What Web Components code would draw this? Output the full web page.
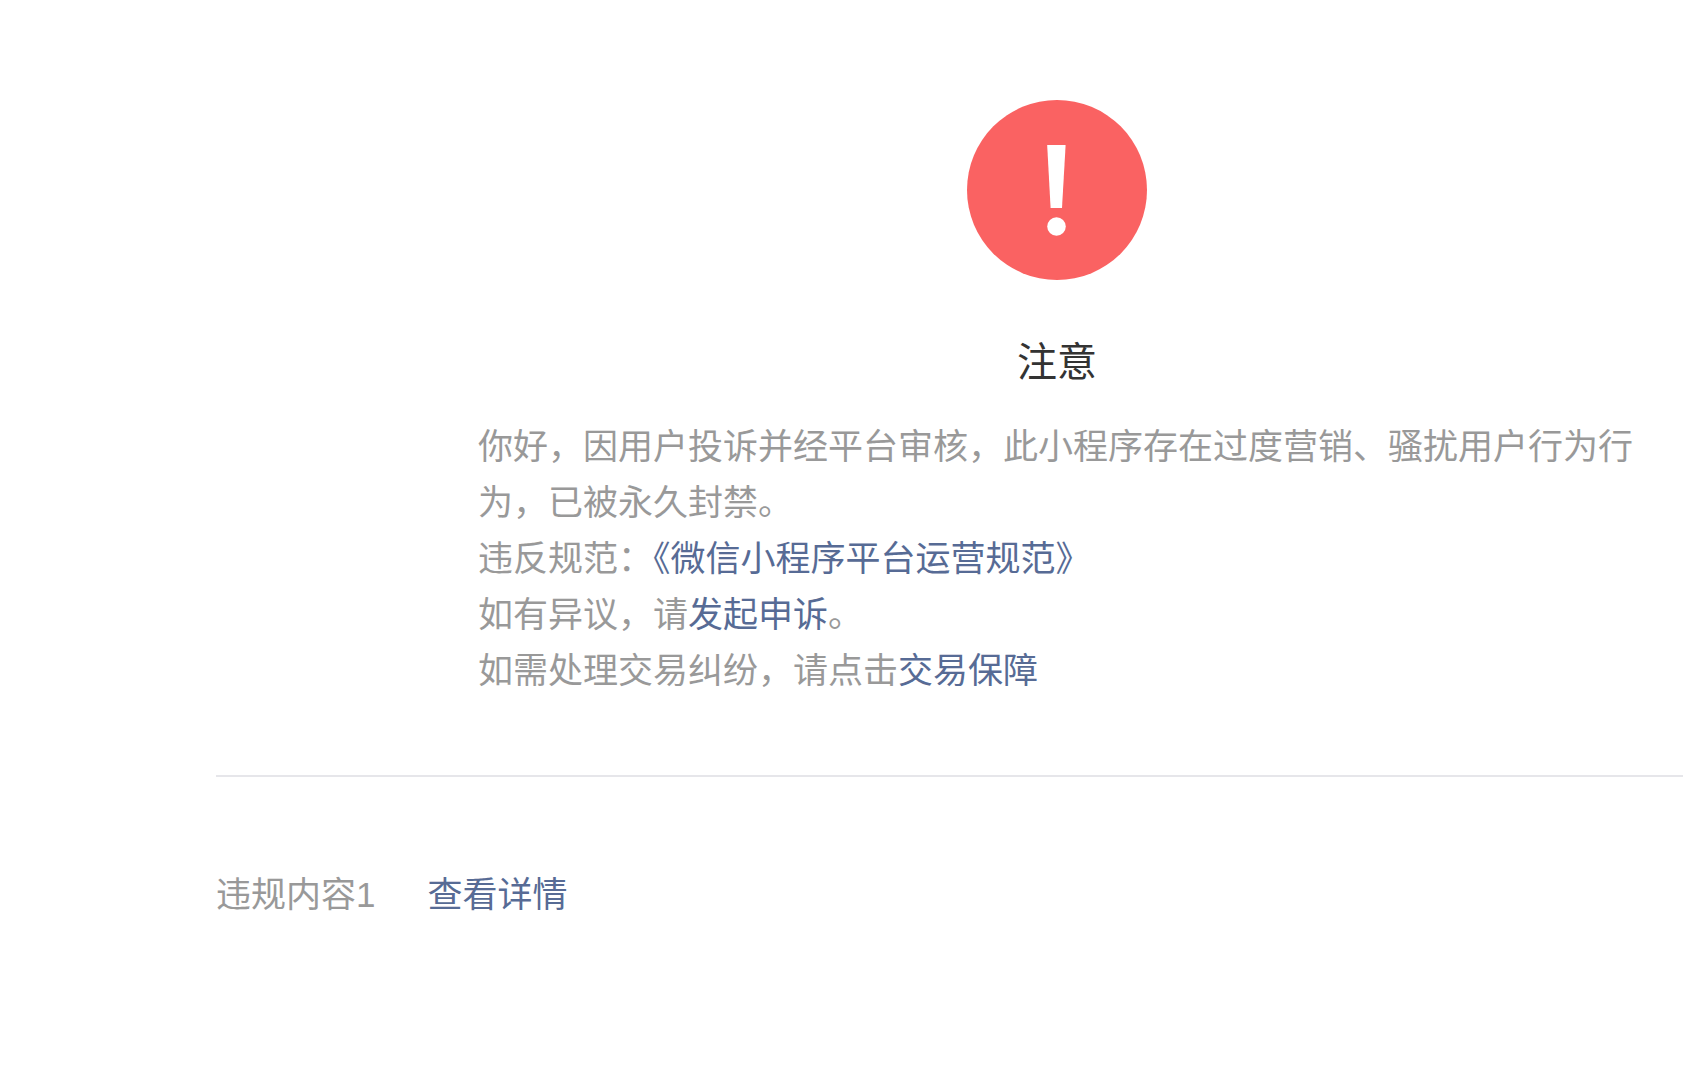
<!DOCTYPE html>
<html lang="zh-CN">
<head>
<meta charset="utf-8">
<title>注意</title>
<style>
  html, body { margin: 0; background: #fff; }
  body { font-family: "Liberation Sans", "Noto Sans CJK SC", sans-serif; }
</style>
</head>
<body>
<notice-page>
  <notice-hero title-text="注意">
    <notice-line>你好，因用户投诉并经平台审核，此小程序存在过度营销、骚扰用户行为行为，已被永久封禁。</notice-line>
    <notice-line>违反规范：<notice-link>《微信小程序平台运营规范》</notice-link></notice-line>
    <notice-line>如有异议，请<notice-link>发起申诉</notice-link>。</notice-line>
    <notice-line>如需处理交易纠纷，请点击<notice-link>交易保障</notice-link></notice-line>
  </notice-hero>
  <violation-row label="违规内容1" action="查看详情"></violation-row>
</notice-page>

<script>
class NoticePage extends HTMLElement {
  constructor() {
    super();
    this.attachShadow({ mode: 'open' });
    this.shadowRoot.innerHTML = `
      <style>
        :host { display: block; min-height: 1085px; box-sizing: border-box; padding: 100px 0 0 216px; overflow: hidden; }
      </style>
      <slot></slot>
    `;
  }
}

class WarnIcon extends HTMLElement {
  constructor() {
    super();
    this.attachShadow({ mode: 'open' });
    this.shadowRoot.innerHTML = `
      <style>
        :host { display: block; width: 180px; height: 180px; }
        svg { display: block; width: 100%; height: 100%; }
      </style>
      <svg viewBox="0 0 180 180">
        <circle cx="90" cy="90" r="90" fill="#fa6262" />
        <path d="M80.4 45 Q80.2 45 80.2 45.5 L83.6 108 L95 108 L98.6 45.5 Q98.6 45 98 45 Z" fill="#fff" />
        <circle cx="89.5" cy="126.500" r="9.300" fill="#fff" />
      </svg>
    `;
  }
}

class NoticeHero extends HTMLElement {
  constructor() {
    super();
    this.attachShadow({ mode: 'open' });
    this.shadowRoot.innerHTML = `
      <style>
        :host { display: flex; flex-direction: column; align-items: center; margin: 0 47px 0 262px; }
        h2 { margin: 54px 0 0; font-size: 40px; line-height: 56px; font-weight: 400; color: #333; }
        .body { margin-top: 29px; width: 100%; }
      </style>
      <warn-icon></warn-icon>
      <h2></h2>
      <div class="body"><slot></slot></div>
    `;
  }

  connectedCallback() {
    this.shadowRoot.querySelector('h2').textContent = this.getAttribute('title-text') || '';
  }
}

class NoticeLine extends HTMLElement {
  constructor() {
    super();
    this.attachShadow({ mode: 'open' });
    this.shadowRoot.innerHTML = `<style>
        :host { display: block; font-size: 35px; line-height: 56px; font-weight: 400; color: #999; }
      </style><slot></slot>`;
  }
}

class NoticeLink extends HTMLElement {
  constructor() {
    super();
    this.attachShadow({ mode: 'open' });
    this.shadowRoot.innerHTML = `<style>
        :host { display: inline; color: #576b95; cursor: pointer; }
      </style><slot></slot>`;
  }
}

class ViolationRow extends HTMLElement {
  constructor() {
    super();
    this.attachShadow({ mode: 'open' });
    this.shadowRoot.innerHTML = `
      <style>
        :host { display: flex; gap: 52px; margin-top: 76px; padding-top: 90px; border-top: 2px solid #e6e6ea;
          font-size: 35px; line-height: 56px; font-weight: 400; color: #999; }
        .action { color: #576b95; cursor: pointer; }
      </style>
      <span class="label"></span>
      <span class="action"></span>
    `;
  }

  connectedCallback() {
    this.shadowRoot.querySelector('.label').textContent = this.getAttribute('label') || '';
    this.shadowRoot.querySelector('.action').textContent = this.getAttribute('action') || '';
  }
}

customElements.define('notice-page', NoticePage);
customElements.define('warn-icon', WarnIcon);
customElements.define('notice-hero', NoticeHero);
customElements.define('notice-line', NoticeLine);
customElements.define('notice-link', NoticeLink);
customElements.define('violation-row', ViolationRow);
</script>
</body>
</html>
